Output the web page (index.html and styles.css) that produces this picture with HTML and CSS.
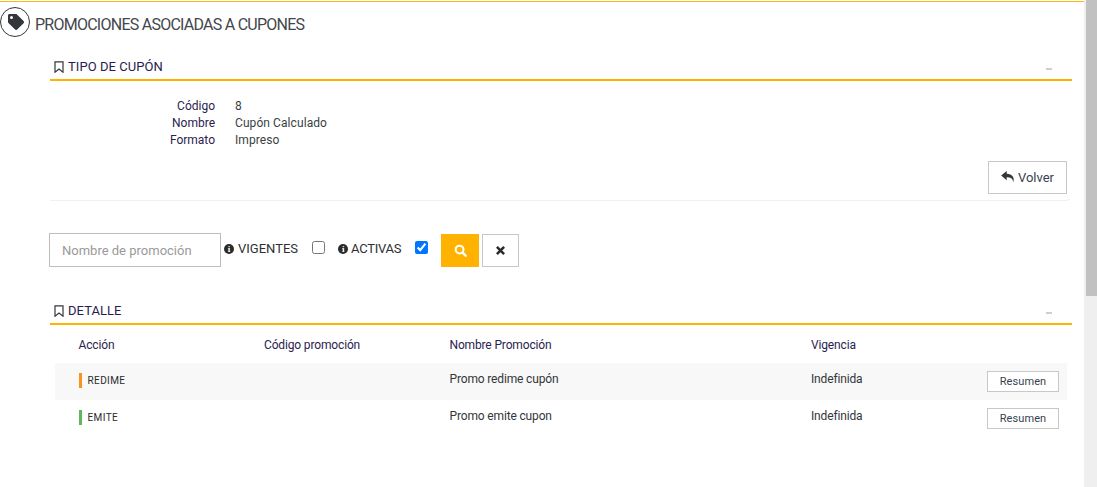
FILE: index.html
```html
<!DOCTYPE html>
<html lang="es">
<head>
<meta charset="utf-8">
<title>Promociones asociadas a cupones</title>
<link rel="stylesheet" href="styles.css">
</head>
<body>
<div class="app">
  <main class="main">
    <header class="page-title">
      <span class="title-icon">
        <svg viewBox="0 0 512 512" width="16" height="16"><path fill="#33363a" d="M0 252V48C0 21 21 0 48 0h204c13 0 25 5 34 14l212 212c19 19 19 49 0 68L294 498c-19 19-49 19-68 0L14 286C5 277 0 265 0 252zM112 64a48 48 0 1 0 0 96 48 48 0 0 0 0-96z"/></svg>
      </span>
      <h1>PROMOCIONES ASOCIADAS A CUPONES</h1>
    </header>

    <section class="panel panel-first">
      <div class="panel-head">
        <svg class="bookmark" viewBox="0 0 10 12" width="10" height="12"><path fill="none" stroke="#33363a" stroke-width="1.2" d="M1 .8h8v10.4L5 8 1 11.2z"/></svg>
        <h2>TIPO DE CUPÓN</h2>
        <span class="collapse"></span>
      </div>
      <div class="panel-body">
        <dl class="info">
          <dt>Código</dt><dd>8</dd>
          <dt>Nombre</dt><dd>Cupón Calculado</dd>
          <dt>Formato</dt><dd>Impreso</dd>
        </dl>
        <div class="actions">
          <button class="btn-back" type="button">
            <svg viewBox="0 0 16 14" width="14" height="12"><path fill="#33363a" d="M6.5 0 0 5.300l6.500 5.400V7.400c4 0 6.800.8 7.700 5.600C16 7.500 12.800 3.600 6.500 3.300z"/></svg>
            <span>Volver</span>
          </button>
        </div>
      </div>
    </section>

    <form class="filters">
      <input class="search" type="text" placeholder="Nombre de promoción">
      <label class="check check-a"><span class="info-dot">i</span>VIGENTES<input type="checkbox"></label>
      <label class="check check-b"><span class="info-dot">i</span>ACTIVAS<input type="checkbox" checked></label>
      <button class="btn-search" type="button" aria-label="Buscar">
        <svg viewBox="0 0 14 14" width="13" height="13"><circle cx="6" cy="6" r="4.200" fill="none" stroke="#fff" stroke-width="2.200"/><path stroke="#fff" stroke-width="2.600" stroke-linecap="round" d="m9.500 9.500 3 3"/></svg>
      </button>
      <button class="btn-clear" type="button" aria-label="Limpiar">
        <svg viewBox="0 0 10 10" width="9" height="9"><path stroke="#2b2b2b" stroke-width="2.800" d="m1 1 8 8M9 1l-8 8"/></svg>
      </button>
    </form>

    <section class="panel panel-detail">
      <div class="panel-head">
        <svg class="bookmark" viewBox="0 0 10 12" width="10" height="12"><path fill="none" stroke="#33363a" stroke-width="1.2" d="M1 .8h8v10.400L5 8 1 11.200z"/></svg>
        <h2>DETALLE</h2>
        <span class="collapse"></span>
      </div>
      <div class="table">
        <div class="row row-head">
          <span>Acción</span><span>Código promoción</span><span>Nombre Promoción</span><span>Vigencia</span><span></span>
        </div>
        <div class="row row-alt">
          <span class="tag tag-orange">REDIME</span><span></span><span class="cell-text">Promo redime cupón</span><span class="cell-text">Indefinida</span>
          <span class="cell-btn"><button class="btn-small" type="button">Resumen</button></span>
        </div>
        <div class="row">
          <span class="tag tag-green">EMITE</span><span></span><span class="cell-text">Promo emite cupon</span><span class="cell-text">Indefinida</span>
          <span class="cell-btn"><button class="btn-small" type="button">Resumen</button></span>
        </div>
      </div>
    </section>
  </main>
  <aside class="scrollbar"><div class="thumb"></div></aside>
</div>
</body>
</html>
```

FILE: styles.css
```css
* { box-sizing: border-box; }
html, body { margin: 0; height: 100%; overflow: hidden; }
body { font-family: Roboto, "Liberation Sans", sans-serif; font-size: 12px; color: #2f3033; background: #fff; }
.app { display: flex; height: 487px; }
.main { flex: 1; min-width: 0; margin-top: 1px; border-top: 1px solid #fdb813; }
.scrollbar { width: 13px; background: #efefef; padding-left: 2px; }
.thumb { height: 296px; background: #c1c1c1; }

.page-title { display: flex; align-items: center; gap: 5px; height: 30px; margin-top: 5px; }
.title-icon { width: 30px; height: 30px; border: 1px solid #33363a; border-radius: 50%; display: flex; align-items: center; justify-content: center; padding: 0 0 1px 1px; }
.page-title h1 { margin: 0; padding-top: 4px; font-size: 16px; font-weight: 400; color: #43474c; letter-spacing: -.75px; }

.panel { margin-left: 50px; width: 1022px; }
.panel-first { margin-top: 15px; }
.panel-head { display: flex; align-items: center; height: 29px; border-bottom: 2px solid #ffb300; padding: 2px 0 0 4px; gap: 4px; position: relative; }
.panel-head h2 { margin: 0; font-size: 13px; font-weight: 400; letter-spacing: .05px; color: #2a1a50; }
.collapse { position: absolute; right: 20px; top: 16px; width: 6px; height: 2px; background: #cfcfcf; }
.panel-body { height: 120px; border-bottom: 1px solid #f1f1f1; border-right: 1px solid transparent; border-radius: 0 0 6px 0; display: flex; flex-direction: column; padding-top: 17px; }

.info { display: grid; grid-template-columns: 165px auto; column-gap: 20px; margin: 0; line-height: 17px; justify-content: start; }
.info dt { text-align: right; color: #2a2350; }
.info dd { margin: 0; color: #3a3f44; letter-spacing: .08px; }
.actions { display: flex; justify-content: flex-end; padding-right: 4px; margin-top: 12px; }
.btn-back { width: 79px; height: 33px; background: #fff; border: 1px solid #c8c8c8; font: inherit; font-size: 13px; color: #3a3f50; display: flex; align-items: center; justify-content: center; gap: 3px; padding: 0 0 1px; }

.filters { display: flex; align-items: flex-start; margin: 32px 0 0 49px; height: 34px; }
.search { width: 172px; height: 34px; border: 1px solid #bdbdbd; padding: 0 12px; font: inherit; font-size: 13px; outline: 0; }
.search::placeholder { color: #9a9a9a; opacity: 1; }
.check { display: flex; align-items: center; height: 31px; font-size: 13px; color: #2f3033; }
.check-a { margin-left: 3px; }
.check-b { margin-left: 13px; letter-spacing: -.25px; }
.check input { margin: 0 0 3px 14px; width: 13px; height: 13px; }
.info-dot { width: 10px; height: 10px; border-radius: 50%; background: #2b2b2b; color: #fff; font: 700 9px/10px "Liberation Serif", serif; text-align: center; margin-right: 4px; }
.check-b .info-dot { margin-right: 3px; }
.btn-search { width: 38px; height: 33px; margin: 1px 0 0 13px; background: #ffb300; border: 0; padding: 0; display: flex; align-items: center; justify-content: center; }
.btn-clear { width: 37px; height: 33px; margin: 1px 0 0 3px; background: #fff; border: 1px solid #c8c8c8; padding: 0; display: flex; align-items: center; justify-content: center; }

.panel-detail { margin-top: 29px; }
.table { padding: 0 5px; }
.row { display: grid; grid-template-columns: 185.500px 185.500px 361.500px 1fr auto; align-items: center; height: 37px; padding: 0 8px 0 23.500px; letter-spacing: -.15px; color: #33363a; }
.row-head { color: #2a2350; height: 38px; padding-top: 2px; }
.row-alt { background: #f8f8f8; }
.cell-text { padding-bottom: 6px; }
.tag { display: flex; align-items: center; height: 15px; margin-bottom: 2px; border-left: 3px solid; padding-left: 6px; font-size: 10px; color: #2b2b2b; letter-spacing: .4px; }
.tag-orange { border-color: #f7931e; }
.tag-green { border-color: #5cb85c; }
.cell-btn { display: flex; justify-content: flex-end; }
.btn-small { width: 72px; height: 21px; background: #fff; border: 1px solid #c8c8c8; font: inherit; font-size: 11px; letter-spacing: .1px; color: #3a3f50; padding: 0; }
```
